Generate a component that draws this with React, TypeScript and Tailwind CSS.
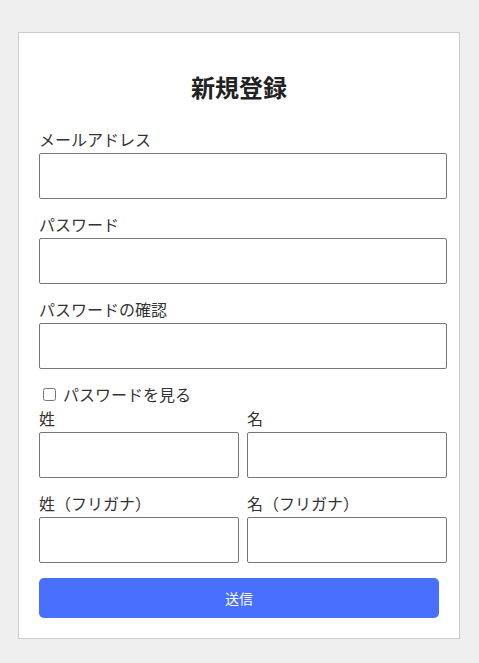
import { useState } from "react";

function Field({ label, type = "text", half = false }: { label: string; type?: string; half?: boolean }) {
  return (
    <div className="flex flex-col">
      <label className="text-[16px] leading-[20px] pb-1 text-[#333]">{label}</label>
      <input
        type={type}
        className={`${half ? "w-[200px]" : "w-[408px]"} h-[46px] border border-[#767676] rounded-[2px] bg-white px-[3px] outline-none`}
      />
    </div>
  );
}

export default function App() {
  const [show, setShow] = useState(false);

  return (
    <div className="min-h-screen bg-[#efefef] pt-8 font-['Noto_Sans_CJK_JP','Noto_Sans',sans-serif]">
      <form
        className="ml-[18px] w-[442px] bg-white border border-[#cccccc] px-5 pt-5 pb-5 flex flex-col"
        onSubmit={(e) => e.preventDefault()}
      >
        <h1 className="mt-[17px] mb-[26px] text-center text-[24px] leading-[33px] font-bold text-[#222]">新規登録</h1>
        <div className="flex flex-col gap-[15px]">
          <Field label="メールアドレス" type="email" />
          <Field label="パスワード" type={show ? "text" : "password"} />
          <Field label="パスワードの確認" type={show ? "text" : "password"} />
          <div>
            <label className="flex items-center text-[16px] leading-[20px] pb-1 text-[#333]">
              <input
                type="checkbox"
                checked={show}
                onChange={(e) => setShow(e.target.checked)}
                className="ml-1 mr-[7px] w-[13px] h-[13px]"
              />
              パスワードを見る
            </label>
            <div className="grid grid-cols-2 gap-x-4">
              <Field label="姓" half />
              <Field label="名" half />
            </div>
          </div>
          <div className="grid grid-cols-2 gap-x-4">
            <Field label="姓（フリガナ）" half />
            <Field label="名（フリガナ）" half />
          </div>
          <button
            type="submit"
            className="h-10 w-full rounded-[5px] bg-[#4870fd] text-white text-[14px] cursor-pointer"
          >
            送信
          </button>
        </div>
      </form>
    </div>
  );
}
